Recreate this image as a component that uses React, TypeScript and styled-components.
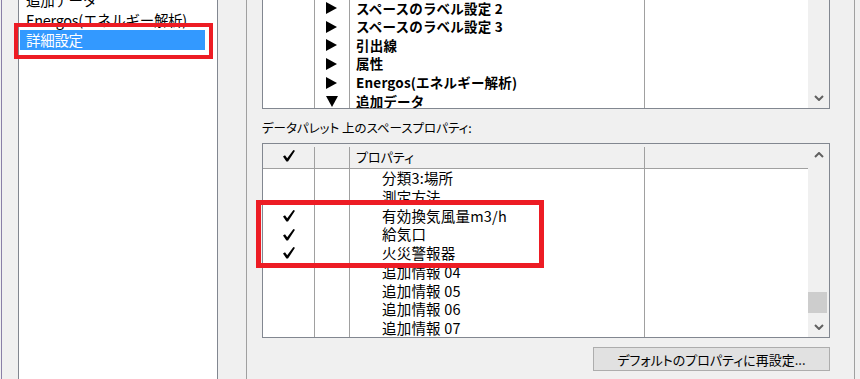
import * as React from "react";
import styled, { createGlobalStyle } from "styled-components";

const GlobalStyle = createGlobalStyle`
  *, *::before, *::after { box-sizing: border-box; }
  html, body { margin: 0; padding: 0; background: #f0f0f0; overflow: hidden; }
  body { font-family: "Noto Sans CJK JP", "Noto Sans", sans-serif; color: #000; }
`;

const Window = styled.div`
  position: relative;
  display: flex;
  width: 860px;
  height: 379px;
  background: #f0f0f0;
  overflow: hidden;
`;

const Edge = styled.div`
  flex: none;
  width: 17px;
  margin-left: 1px;
  border-left: 1px solid #8a80a8;
`;

const CategoryList = styled.div`
  flex: none;
  width: 200px;
  height: 100%;
  margin-right: 28px;
  background: #fff;
  border-left: 1px solid #828790;
  border-right: 1px solid #828790;
  overflow: hidden;
`;

const CategoryItems = styled.div`
  margin-top: -10px;
`;

const CategoryItem = styled.div<{ $selected?: boolean }>`
  height: 20px;
  margin: 0 12px 0 1px;
  padding-left: 6px;
  font-size: 14.5px;
  line-height: 20px;
  letter-spacing: -0.3px;
  white-space: nowrap;
  background: ${(p) => (p.$selected ? "#3399ff" : "transparent")};
  color: ${(p) => (p.$selected ? "#fff" : "#000")};
`;

const Group = styled.div`
  flex: none;
  width: 609px;
  height: 100%;
  padding-left: 15px;
  border-left: 1px solid #a0a0a0;
  border-right: 1px solid #a0a0a0;
  display: flex;
  flex-direction: column;
`;

const ListView = styled.div<{ $height: number; $top?: boolean }>`
  width: 568px;
  height: ${(p) => p.$height}px;
  background: #fff;
  border: 1px solid #828790;
  border-top: ${(p) => (p.$top ? "none" : "1px solid #828790")};
  display: flex;
  overflow: hidden;
`;

const ListMain = styled.div`
  flex: 1;
  display: flex;
  flex-direction: column;
  overflow: hidden;
`;

const ListBody = styled.div<{ $offset?: number }>`
  flex: 1;
  overflow: hidden;
  margin-top: ${(p) => p.$offset ?? 0}px;
`;

const Row = styled.div<{ $h: number }>`
  display: grid;
  grid-template-columns: 52px 35px 295px 1fr;
  height: ${(p) => p.$h}px;
`;

const Cell = styled.div<{ $line?: boolean; $center?: boolean; $indent?: number }>`
  display: flex;
  align-items: center;
  justify-content: ${(p) => (p.$center ? "center" : "flex-start")};
  padding-left: ${(p) => p.$indent ?? 0}px;
  border-right: ${(p) => (p.$line ? "1px solid #a0a0a0" : "none")};
  white-space: nowrap;
  overflow: hidden;
  line-height: 1;
`;

const GroupText = styled.span`
  font-size: 13.5px;
  font-weight: 700;
  line-height: 1;
  letter-spacing: 0.2px;
`;

const PropText = styled.span`
  font-size: 14.5px;
  line-height: 1;
  letter-spacing: 0.2px;
`;

const Header = styled.div`
  display: grid;
  grid-template-columns: 52px 35px 295px 1fr;
  height: 25px;
  flex: none;
  background: #f0f0f0;
  border-bottom: 1px solid #a0a0a0;
`;

const HeaderCell = styled.div<{ $center?: boolean; $divider?: boolean }>`
  position: relative;
  display: flex;
  align-items: center;
  justify-content: ${(p) => (p.$center ? "center" : "flex-start")};
  padding-left: ${(p) => (p.$center ? 0 : 6)}px;
  font-size: 13px;
  line-height: 1;
  font-feature-settings: "palt";

  &::after {
    content: "";
    display: ${(p) => (p.$divider ? "block" : "none")};
    position: absolute;
    right: 0;
    top: 3px;
    bottom: 0;
    width: 1px;
    background: #a0a0a0;
  }
`;

const ScrollBar = styled.div`
  flex: none;
  width: 21px;
  background: #f0f0f0;
  display: flex;
  flex-direction: column;
`;

const ScrollButton = styled.div`
  flex: none;
  height: 21px;
  display: flex;
  align-items: center;
  justify-content: center;
`;

const ScrollTrack = styled.div`
  flex: 1;
  display: flex;
  flex-direction: column;
  justify-content: flex-end;
`;

const ScrollThumb = styled.div`
  height: 21px;
  width: 19px;
  margin-bottom: 3px;
  background: #cdcdcd;
`;

const Label = styled.div`
  flex: none;
  height: 34px;
  padding-top: 10px;
  font-size: 12.5px;
  line-height: 18px;
  font-feature-settings: "palt";
  white-space: nowrap;
`;

const Footer = styled.div`
  width: 568px;
  display: flex;
  justify-content: flex-end;
  margin-top: 9px;
`;

const Button = styled.button`
  width: 237px;
  height: 24px;
  padding: 0;
  background: #e1e1e1;
  border: 1px solid #adadad;
  font-family: "Noto Sans CJK JP", sans-serif;
  font-size: 13px;
  line-height: 1;
  font-feature-settings: "palt";
  color: #000;
`;

const Callout = styled.div<{ $w: number }>`
  position: absolute;
  border: ${(p) => p.$w}px solid #ed1c24;
  pointer-events: none;
`;

const Check = () => (
  <svg width="12" height="12" viewBox="0 0 12 12">
    <polygon points="0,6.5 2,5.2 4.2,8.2 10.4,0 12,0.8 5,11.6 3.4,11.6" fill="#000" />
  </svg>
);

const Triangle = ({ down }: { down?: boolean }) =>
  down ? (
    <svg width="12" height="12" viewBox="0 0 12 12">
      <polygon points="0,1 12,1 6,12" fill="#000" />
    </svg>
  ) : (
    <svg width="11" height="12" viewBox="0 0 11 12">
      <polygon points="0,0 11,6 0,12" fill="#000" />
    </svg>
  );

const Chevron = ({ up }: { up?: boolean }) => (
  <svg width="10" height="6" viewBox="0 0 10 6">
    <polyline
      points={up ? "1,5 5,1 9,5" : "1,1 5,5 9,1"}
      fill="none"
      stroke="#606060"
      strokeWidth="2"
    />
  </svg>
);

const categories = ["追加データ", "Energos(エネルギー解析)", "詳細設定"];

const groups = [
  "スペースのラベル設定 2",
  "スペースのラベル設定 3",
  "引出線",
  "属性",
  "Energos(エネルギー解析)",
  "追加データ",
];

const properties: { name: string; on: boolean }[] = [
  { name: "分類3:場所", on: false },
  { name: "測定方法", on: false },
  { name: "有効換気風量m3/h", on: true },
  { name: "給気口", on: true },
  { name: "火災警報器", on: true },
  { name: "追加情報 04", on: false },
  { name: "追加情報 05", on: false },
  { name: "追加情報 06", on: false },
  { name: "追加情報 07", on: false },
];

export default function App() {
  return (
    <>
      <GlobalStyle />
      <Window>
        <Edge />
        <CategoryList>
          <CategoryItems>
            {categories.map((c, i) => (
              <CategoryItem key={c} $selected={i === categories.length - 1}>
                {c}
              </CategoryItem>
            ))}
          </CategoryItems>
        </CategoryList>

        <Group>
          <ListView $height={109} $top>
            <ListMain>
              <ListBody $offset={-1}>
                {groups.map((g, i) => (
                  <Row key={g} $h={18.6}>
                    <Cell $line />
                    <Cell $line $indent={11}>
                      <Triangle down={i === groups.length - 1} />
                    </Cell>
                    <Cell $line $indent={6}>
                      <GroupText>{g}</GroupText>
                    </Cell>
                    <Cell />
                  </Row>
                ))}
              </ListBody>
            </ListMain>
            <ScrollBar>
              <ScrollTrack />
              <ScrollButton>
                <Chevron />
              </ScrollButton>
            </ScrollBar>
          </ListView>

          <Label>データパレット 上のスペースプロパティ:</Label>

          <ListView $height={195}>
            <ListMain>
              <Header>
                <HeaderCell $center $divider>
                  <Check />
                </HeaderCell>
                <HeaderCell $divider />
                <HeaderCell $divider>プロパティ</HeaderCell>
                <HeaderCell />
              </Header>
              <ListBody>
                {properties.map((p) => (
                  <Row key={p.name} $h={18.75}>
                    <Cell $line $center>
                      {p.on && <Check />}
                    </Cell>
                    <Cell $line />
                    <Cell $line $indent={32}>
                      <PropText>{p.name}</PropText>
                    </Cell>
                    <Cell />
                  </Row>
                ))}
              </ListBody>
            </ListMain>
            <ScrollBar>
              <ScrollButton>
                <Chevron up />
              </ScrollButton>
              <ScrollTrack>
                <ScrollThumb />
              </ScrollTrack>
              <ScrollButton>
                <Chevron />
              </ScrollButton>
            </ScrollBar>
          </ListView>

          <Footer>
            <Button>デフォルトのプロパティに再設定...</Button>
          </Footer>
        </Group>

        <Callout $w={4} style={{ left: 14, top: 23, width: 199, height: 36 }} />
        <Callout $w={5} style={{ left: 256, top: 200, width: 288, height: 68 }} />
      </Window>
    </>
  );
}
